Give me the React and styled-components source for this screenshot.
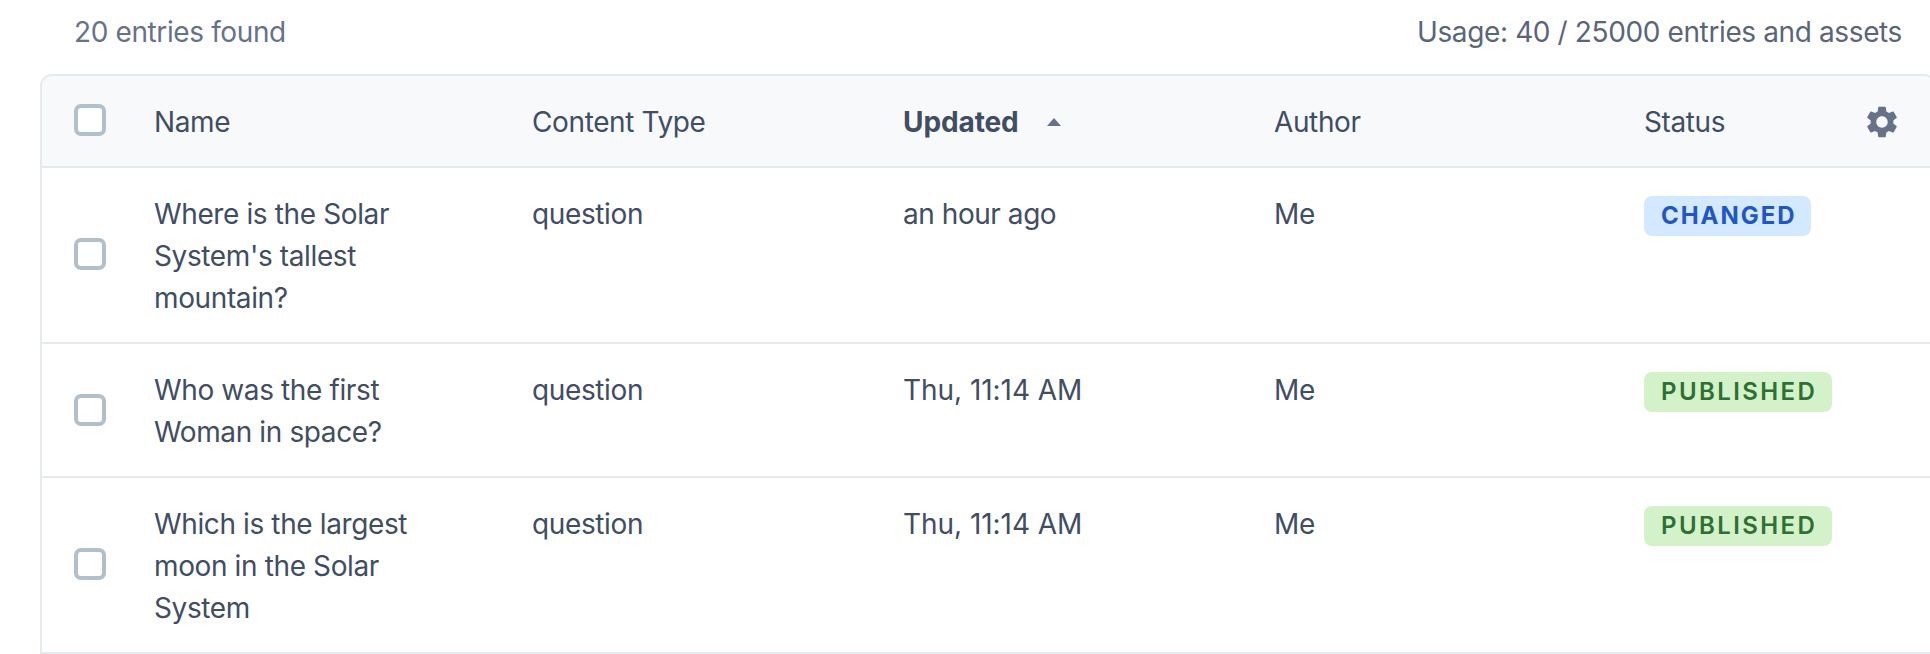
import React from "react";
import styled, { createGlobalStyle } from "styled-components";
import { MdSettings } from "react-icons/md";

const GlobalStyle = createGlobalStyle`
  * { box-sizing: border-box; }
  body {
    margin: 0;
    background: #fff;
    overflow: hidden;
    font-family: Inter, "Liberation Sans", sans-serif;
    font-size: 28px;
    font-weight: 400;
    line-height: 42px;
    letter-spacing: -0.38px;
    color: #414d63;
    -webkit-font-smoothing: antialiased;
  }
`;

const Page = styled.main`
  width: 1936px;
  height: 654px;
  padding-left: 40px;
`;

const Summary = styled.header`
  display: flex;
  justify-content: space-between;
  height: 74px;
  padding: 11px 34px 0;
`;

const Found = styled.span`
  color: #67728a;
`;

const Usage = styled.span`
  color: #5a657c;
`;

const Table = styled.section`
  border: 2px solid #e5ebed;
  border-radius: 12px 12px 0 0;
  overflow: hidden;
`;

const Row = styled.div`
  display: grid;
  grid-template-columns: 88px 378px 371px 371px 370px 1fr;
  padding: 25px 0 23px;
  border-bottom: ${(p) => (p.$last ? "0" : "2px solid #e5ebed")};
  background: ${(p) => (p.$head ? "#f7f9fa" : "#fff")};
`;

const Cell = styled.div`
  padding-left: 24px;
`;

const NameCell = styled(Cell)`
  padding-right: 54px;
`;

const TimeCell = styled(Cell)`
  letter-spacing: ${(p) => (p.$relative ? "-0.45px" : "-0.05px")};
`;

const CheckCell = styled.div`
  display: flex;
  align-items: center;
  padding: 0 0 ${(p) => p.$lift}px 32px;
`;

const Checkbox = styled.span`
  width: 32px;
  height: 32px;
  border: 4px solid #b1c0cb;
  border-radius: 7px;
  background: #fff;
`;

const SortCell = styled(Cell)`
  display: flex;
  align-items: center;
  gap: 28px;
  font-weight: 700;
  letter-spacing: -0.1px;
`;

const SortArrow = styled.span`
  width: 0;
  height: 0;
  border: solid transparent;
  border-width: 0 7.5px 8px;
  border-bottom-color: #67728a;
`;

const StatusHead = styled(Cell)`
  display: flex;
  align-items: center;
  justify-content: space-between;
  height: 42px;
  padding-right: 33px;
`;

const Badge = styled.span`
  display: flex;
  align-items: center;
  width: max-content;
  height: 40px;
  margin-top: 3px;
  padding: 0 15px 0 17px;
  border-radius: 8px;
  font-size: 24px;
  font-weight: ${(p) => (p.$tone === "blue" ? 700 : 600)};
  letter-spacing: ${(p) => (p.$tone === "blue" ? "1.95px" : "2.4px")};
  line-height: 40px;
  color: ${(p) => (p.$tone === "blue" ? "#2156c4" : "#2e7033")};
  background: ${(p) => (p.$tone === "blue" ? "#d3e9ff" : "#d3f2c9")};
`;

const entries = [
  { name: "Where is the Solar System's tallest mountain?", updated: "an hour ago", relative: true, status: "CHANGED", tone: "blue", lift: 4 },
  { name: "Who was the first Woman in space?", updated: "Thu, 11:14 AM", status: "PUBLISHED", tone: "green", lift: 2 },
  { name: "Which is the largest moon in the Solar System", updated: "Thu, 11:14 AM", status: "PUBLISHED", tone: "green", lift: 4 },
];

export default function App() {
  return (
    <>
      <GlobalStyle />
      <Page>
        <Summary>
          <Found>20 entries found</Found>
          <Usage>Usage: 40 / 25000 entries and assets</Usage>
        </Summary>
        <Table>
          <Row $head>
            <CheckCell $lift={4}><Checkbox /></CheckCell>
            <NameCell>Name</NameCell>
            <Cell>Content Type</Cell>
            <SortCell>
              Updated
              <SortArrow />
            </SortCell>
            <Cell>Author</Cell>
            <StatusHead>
              Status
              <MdSettings size={38} color="#67728a" />
            </StatusHead>
          </Row>
          {entries.map((entry, i) => (
            <Row key={entry.name} $last={i === entries.length - 1}>
              <CheckCell $lift={entry.lift}><Checkbox /></CheckCell>
              <NameCell>{entry.name}</NameCell>
              <Cell>question</Cell>
              <TimeCell $relative={entry.relative}>{entry.updated}</TimeCell>
              <Cell>Me</Cell>
              <Cell>
                <Badge $tone={entry.tone}>{entry.status}</Badge>
              </Cell>
            </Row>
          ))}
        </Table>
      </Page>
    </>
  );
}
